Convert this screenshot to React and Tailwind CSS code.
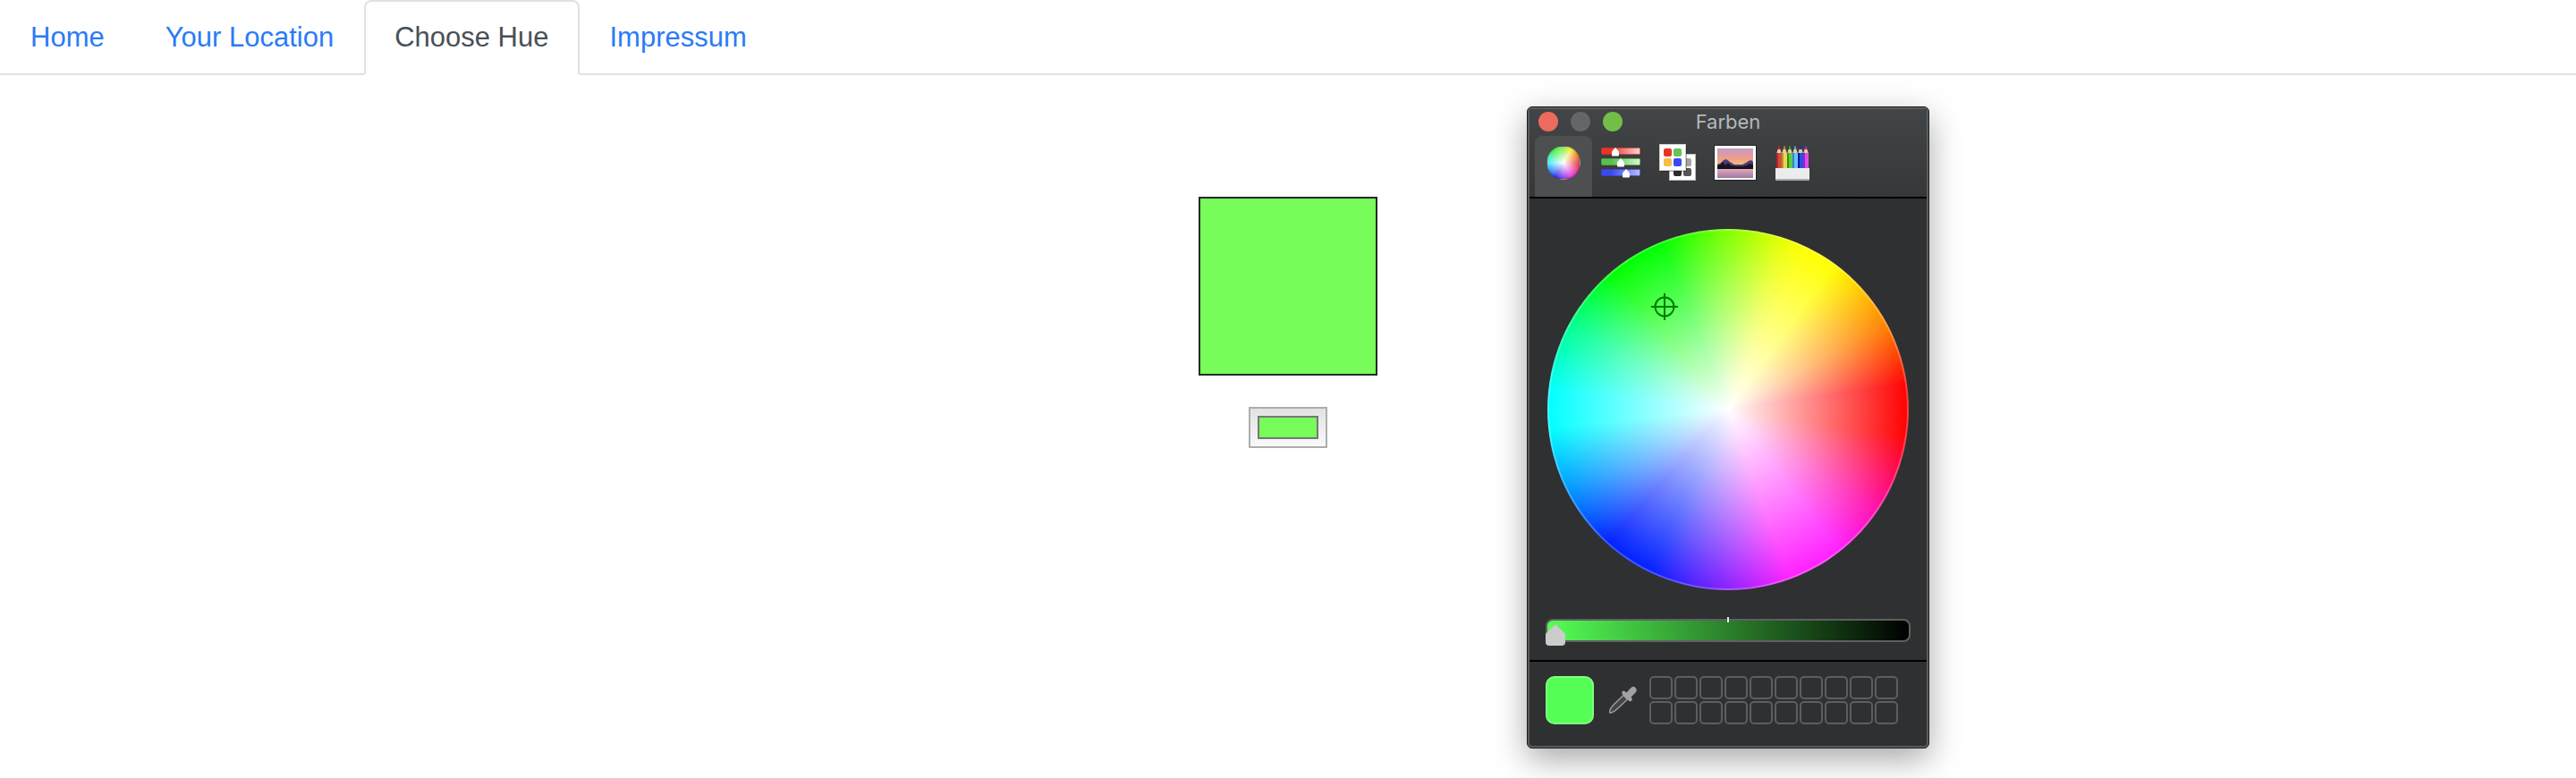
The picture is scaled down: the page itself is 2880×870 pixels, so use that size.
import { useState } from "react";

const tabs = ["Home", "Your Location", "Choose Hue", "Impressum"];
const GREEN = "#77fc5a";

function Navigation() {
  return (
    <nav className="flex items-end border-b-2 border-[#dee2e6] font-['Liberation_Sans',sans-serif] text-[31px] leading-12">
      {tabs.map((tab) => {
        const active = tab === "Choose Hue";
        return (
          <a
            key={tab}
            href={"#" + tab.toLowerCase().replace(" ", "-")}
            aria-current={active ? "page" : undefined}
            className={
              active
                ? "-mb-0.5 rounded-t-lg border-2 border-[#dee2e6] border-b-white bg-white px-8 py-4 text-[#495057]"
                : "-mb-0.5 rounded-t-lg border-2 border-transparent px-8 py-4 text-[#2b7bf6]"
            }
          >
            {tab}
          </a>
        );
      })}
    </nav>
  );
}

function WheelIcon() {
  return (
    <span className="block size-[38px] rounded-full border border-black/20 bg-[radial-gradient(closest-side,white,transparent),conic-gradient(#8e4,#ee4_30deg,#f0862c_60deg,#e83a3a_90deg,#e03be0_150deg,#33e_210deg,#4ef_270deg,#4e5_320deg,#8e4)]" />
  );
}

function SlidersIcon() {
  const rows = [
    { id: "r", y: 0, x: 16, from: "#e8352b", to: "#fbd3d3" },
    { id: "g", y: 12, x: 22, from: "#58c04e", to: "#d3fbd0" },
    { id: "b", y: 24, x: 28, from: "#3a49f0", to: "#b9bdfa" },
  ];
  return (
    <svg width="44" height="34" viewBox="0 0 44 34">
      {rows.map((r) => (
        <g key={r.id}>
          <linearGradient id={"bar-" + r.id}>
            <stop offset="0.25" stopColor={r.from} />
            <stop offset="1" stopColor={r.to} />
          </linearGradient>
          <rect x="0.5" y={r.y + 0.5} width="43" height="7" rx="1" fill={"url(#bar-" + r.id + ")"} stroke={r.from} strokeOpacity="0.5" />
          <path d={`M${r.x} ${r.y}l4 4.500v4q0 1-1 1h-6q-1 0-1-1v-4z`} fill="#fff" />
        </g>
      ))}
    </svg>
  );
}

function PalettesIcon() {
  return (
    <svg width="42" height="42" viewBox="0 0 42 42">
      <rect x="11.500" y="11.500" width="29" height="29" fill="#fff" stroke="#bbb" />
      <rect x="27" y="16" width="9" height="9" rx="2" fill="#a5a5a5" />
      <rect x="16" y="27" width="9" height="9" rx="2" fill="#2c2c2c" />
      <rect x="27" y="27" width="9" height="9" rx="2" fill="#555" />
      <rect x="1" y="1" width="30" height="30" fill="#000" opacity="0.3" />
      <rect x="0.500" y="0.500" width="29" height="29" fill="#fff" stroke="#ccc" />
      <rect x="5" y="5" width="9" height="9" rx="2" fill="#ea3323" />
      <rect x="16" y="5" width="9" height="9" rx="2" fill="#62c554" />
      <rect x="5" y="16" width="9" height="9" rx="2" fill="#f5bf42" />
      <rect x="16" y="16" width="9" height="9" rx="2" fill="#3a49f5" />
    </svg>
  );
}

function PictureIcon() {
  return (
    <svg width="48" height="40" viewBox="0 0 48 40">
      <linearGradient id="sky" x1="0" y1="0" x2="0" y2="1">
        <stop offset="0" stopColor="#c39ac4" />
        <stop offset="0.5" stopColor="#ee9f8b" />
        <stop offset="1" stopColor="#fbd56a" />
      </linearGradient>
      <linearGradient id="lake" x1="0" y1="0" x2="0" y2="1">
        <stop offset="0" stopColor="#e3a9bd" />
        <stop offset="1" stopColor="#9c7ba0" />
      </linearGradient>
      <rect x="0.5" y="0.5" width="47" height="39" fill="#fff" stroke="#222" />
      <rect x="4" y="4" width="40" height="23" fill="url(#sky)" />
      <path d="M4 27v-5l4-2 3-3 3-1 4 3 5 3h9l4-2 3-2 3-1 2 2v8z" fill="#4b3a78" />
      <path d="M4 27v-4l4-1 2-3 3 4 3-3 3 3 6 1h7l5-1 3-2 4 1v5z" fill="#18151c" />
      <rect x="4" y="27" width="40" height="10" fill="url(#lake)" />
    </svg>
  );
}

function PencilsIcon() {
  const pencils = [
    ["#d94a44", "#a82a26", "#c92b1b"],
    ["#ecd650", "#b8982c", "#c98a1b"],
    ["#5fcb44", "#2f8f22", "#3aa32a"],
    ["#66c5f7", "#3187c9", "#4ab0ee"],
    ["#2450f2", "#0a1c94", "#1030d0"],
    ["#dd4cea", "#9a26ac", "#b32cc4"],
  ];
  return (
    <svg width="38" height="40" viewBox="0 0 38 40">
      {pencils.map(([light, dark, tip], i) => (
        <g key={light} transform={`translate(${1 + i * 6} 0)`}>
          <path d="M0 10l2-6h2l2 6z" fill="#eccba6" />
          <path d="M2 4q0-3 1-3t1 3v1h-2z" fill={tip} />
          <rect y="9" width="6" height="17" fill={light} />
          <rect y="9" width="2" height="17" fill={dark} />
        </g>
      ))}
      <rect y="26" width="38" height="13" fill="#ececec" />
      <rect y="38" width="38" height="2" fill="#a9a9a9" />
    </svg>
  );
}

function Eyedropper() {
  return (
    <svg width="32" height="32" viewBox="0 0 32 32">
      <path d="M17 10.500L6 21Q2 25 1.500 29Q1.500 30.500 3 30Q7 29 11 25L21.500 15z" fill="#454648" stroke="#a2a2a4" strokeWidth="1.300" />
      <path d="M15.500 6.500q1.500-2 3.500 0l1.500 1L25 2.500q3-3 5.500-.5t0 5.500L25.500 12.500l1 1.500q1 2-1 3t-3-1l-6-6q-2-2-1-3.500z" fill="#a2a2a4" />
    </svg>
  );
}

const modes = [
  { name: "Farbrad", Icon: WheelIcon },
  { name: "Farbregler", Icon: SlidersIcon },
  { name: "Farbpaletten", Icon: PalettesIcon },
  { name: "Bildpaletten", Icon: PictureIcon },
  { name: "Stifte", Icon: PencilsIcon },
];

function ColourPanel() {
  const [mode, setMode] = useState("Farbrad");
  return (
    <section
      aria-label="Farben"
      className="absolute top-[119px] left-1/2 ml-[267px] w-[450px] rounded-md border border-[#1c1c1d] bg-[#2f3032] shadow-[0_12px_36px_rgba(0,0,0,0.35)]"
    >
      <div className="rounded-[5px] border-2 border-[#5a5b5c]">
        <header className="rounded-t border-b-2 border-black bg-linear-to-b from-[#424547] to-[#363739]">
          <div className="grid grid-cols-3 items-center px-2.5 pb-0.5">
            <div className="flex gap-3.5">
              <button aria-label="Schließen" className="size-[22px] rounded-full bg-[#ed6a5e]" />
              <button aria-label="Minimieren" className="size-[22px] rounded-full bg-[#656668]" />
              <button aria-label="Vergrößern" className="size-[22px] rounded-full bg-[#72be47]" />
            </div>
            <h2 className="text-center text-[22px] leading-7 text-[#b6b8b9]">Farben</h2>
          </div>
          <div className="flex px-1.5">
            {modes.map(({ name, Icon }) => (
              <button
                key={name}
                aria-label={name}
                onClick={() => setMode(name)}
                className={
                  mode === name
                    ? "flex h-[68px] w-16 items-center justify-center rounded-t-lg bg-[#4d4f51] pb-2"
                    : "flex h-[68px] w-16 items-center justify-center pb-2"
                }
              >
                <Icon />
              </button>
            ))}
          </div>
        </header>

        <div className="flex flex-col gap-8 border-b-2 border-black px-[18px] pt-[34px] pb-5">
          <div className="relative mx-auto size-[404px] rounded-full border-2 border-white/25 bg-[radial-gradient(closest-side,white,transparent),conic-gradient(#80ff00,#e8ff00_18deg,#ffff00_26deg,#ffff00_36deg,#ffe000_43deg,#ff8000_62deg,#ff0000_82deg,#ff0000_98deg,#ff10b0_125deg,#ff20ff_142deg,#ff20ff_160deg,#8020ff_182deg,#0020ff_206deg,#0020ff_222deg,#0090ff_242deg,#00ffff_264deg,#00ffff_276deg,#00ff90_298deg,#00ff00_320deg,#00ff00_338deg,#80ff00)] bg-origin-border">
            <svg className="absolute top-[70px] left-[114px]" width="30" height="30" viewBox="0 0 30 30" fill="none" stroke="#007e00" strokeWidth="2">
              <circle cx="15" cy="15" r="10.500" />
              <path d="M15 0v30M0 15h30" />
            </svg>
          </div>
          <div className="relative grid h-[26px]">
            <div className="col-start-1 row-start-1 h-[26px] rounded-lg border-2 border-[#5f6062] bg-linear-to-r/srgb from-[#55ff55] to-black" />
            <input
              type="range"
              aria-label="Helligkeit"
              defaultValue="0"
              className="relative col-start-1 row-start-1 h-[30px] w-full appearance-none bg-transparent pt-1.5 [&::-webkit-slider-thumb]:h-6 [&::-webkit-slider-thumb]:w-[22px] [&::-webkit-slider-thumb]:appearance-none [&::-webkit-slider-thumb]:rounded-sm [&::-webkit-slider-thumb]:bg-[#cbcccb] [&::-webkit-slider-thumb]:[clip-path:polygon(50%_0,100%_45%,100%_100%,0_100%,0_45%)]"
            />
            <span className="absolute -top-0.5 left-1/2 -ml-px h-1.5 w-0.5 bg-[#e6e6e6]" />
          </div>
        </div>

        <footer className="flex items-center px-[18px] pt-4 pb-6">
          <button aria-label="Aktuelle Farbe" className="size-[54px] rounded-[10px] border-2 border-[#7eff7e] bg-[#55ff55]" />
          <button aria-label="Pipette" className="ml-4">
            <Eyedropper />
          </button>
          <div className="ml-3.5 grid grid-cols-10 gap-0.5">
            {Array.from({ length: 20 }, (_, i) => (
              <button key={i} aria-label={"Farbfeld " + (i + 1)} className="size-[26px] rounded-[5px] border-2 border-[#5d5e60]" />
            ))}
          </div>
        </footer>
      </div>
    </section>
  );
}

export default function App() {
  const [colour, setColour] = useState(GREEN);
  return (
    <div className="relative min-h-screen overflow-hidden bg-white font-['Inter',sans-serif]">
      <Navigation />
      <main className="flex flex-col items-center gap-[35px] pt-[136px]">
        <div className="size-[200px] border-2 border-[#25282c]" style={{ backgroundColor: colour }} />
        <input
          type="color"
          aria-label="Choose Hue"
          value={colour}
          onChange={(e) => setColour(e.target.value)}
          className="h-[46px] w-[88px] appearance-none border-2 border-[#adadad] bg-linear-to-b from-[#e2e2e2] to-[#f9f9f9] p-2 [&::-webkit-color-swatch]:border-2 [&::-webkit-color-swatch]:border-[#777] [&::-webkit-color-swatch-wrapper]:p-0"
        />
      </main>
      <ColourPanel />
    </div>
  );
}
